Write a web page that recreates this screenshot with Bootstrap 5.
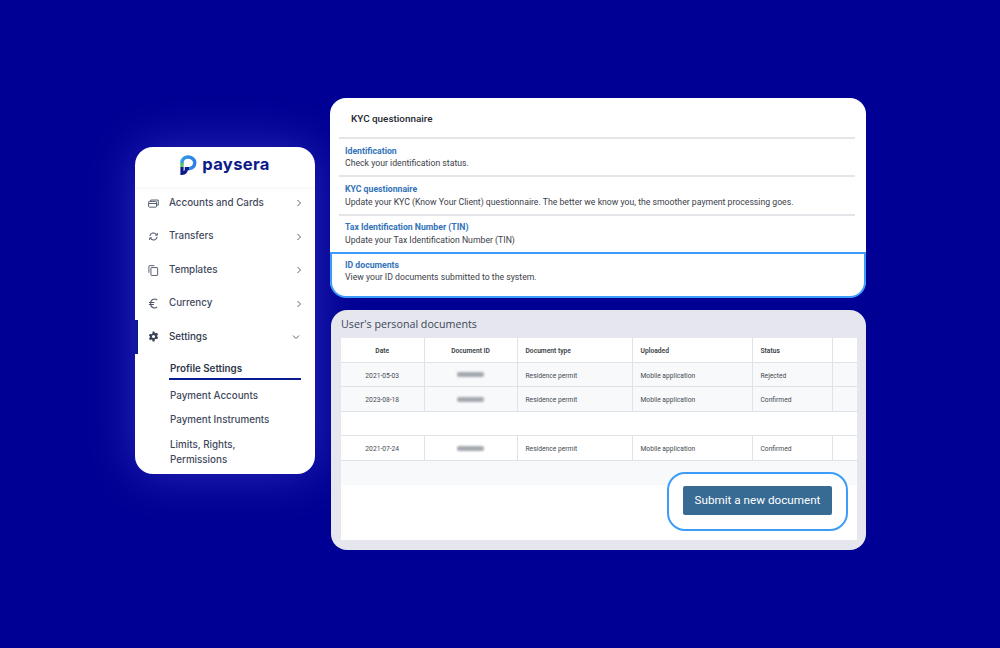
<!DOCTYPE html>
<html lang="en">
<head>
<meta charset="utf-8">
<title>Paysera KYC</title>
<link href="https://cdn.jsdelivr.net/npm/bootstrap@5.3.0/dist/css/bootstrap.min.css" rel="stylesheet">
<style>
html,body{height:100%;margin:0}
body{background:#000094;overflow:hidden;font-family:Roboto,"Liberation Sans",sans-serif}
.stage{width:1000px;height:648px;padding:98px 0 0 135px;gap:15px}
.side{width:180px;height:327px;margin-top:49px;background:#fff;border-radius:18px;box-shadow:0 0 50px rgba(120,120,255,.34);font-family:Inter,"Noto Sans",sans-serif;color:#3f495c}
.logo{height:39.7px;gap:5px;padding-bottom:3.7px;box-shadow:0 2px 4px rgba(20,30,80,.04)}
.logo-word{font:700 16.6px/1 Inter,sans-serif;color:#0c1a8a;letter-spacing:.3px;margin-top:-2px}
.mrow{height:33.4px;padding:0 12.6px 0 13px;font-size:9.8px;font-weight:500;background:transparent;border:0;color:#3f495c}
.mrow svg.ic{width:11px;height:11px;margin-right:10px;flex:none}
.mrow .chev{margin-left:auto;width:6px;height:8px}
.mrow.on{border-left:3px solid #0a1a8f;padding-left:10px;color:#2f384b}
.mrow.on .chev{width:8px;height:6px;margin-right:2px}
.sub{padding:0 14px 0 34px;font-size:9.8px;font-weight:500;line-height:15px}
.sub div{padding:4.7px 0 4.7px 1px}
.sub .cur{font-weight:600;color:#2f384b;border-bottom:2px solid #0a1a8f;padding:7.3px 0 2px 1px;margin-bottom:3px}
.sub .last{padding-top:5px}
.rcol{width:536px;gap:13px}
.kyc{height:199px;background:#fff;border-radius:16px;position:relative;font-size:8.7px;color:#3c4048}
.kyc h1{font-size:9.9px;font-weight:500;color:#24282f;margin:0;padding:1px 21px 0;line-height:39px;height:39px}
.list-group-item.kitem{margin:0 11px 0 9px;padding:5.8px 6px 0;height:38.3px;border:0;border-top:2px solid #e3e5e9;border-radius:0;background:transparent;line-height:12.4px;color:#3c4048}
.kitem b{display:block;color:#3373b8;font-weight:700}
.list-group-item.kitem.hl{margin:0;height:46px;padding:5px 13px 0;border:2px solid #3c9cf7;border-radius:0 0 16px 16px}
.docs{margin-left:1px;width:535px;height:240px;background:#e6e7ee;border-radius:16px;padding:0 9px 10px 10px}
.docs h2{font:400 10.7px/28px "Open Sans",sans-serif;color:#3d4658;margin:0}
.sheet{background:#fff;height:202px}
.grid{table-layout:fixed;width:100%;margin:0;font-size:6.7px;color:#454a52;--bs-table-bg:transparent;border-collapse:collapse}
.grid td,.grid th{padding:3px 0 0;height:24.5px;vertical-align:middle;border:0;border-bottom:1px solid #dfe3e8;border-right:1px solid #dfe3e8;box-shadow:none;background:transparent;color:#454a52}
.grid th{font-weight:600;color:#3a3e45;height:24px}
.grid td:last-child,.grid th:last-child{border-right:0}
.grid .tl{padding-left:8px;text-align:left}
.grid .tc{text-align:center}
.grid tr.tint td{background:#f8f9fb}
.smear{display:block;width:27px;height:5px;margin:-2px auto 0;background:#a4a9b0;border-radius:2px;filter:blur(1.2px)}
.tailrow{height:24px;background:#f8f9fb}
.ring{width:181px;height:59px;margin:-13px 9px 0 0;padding-bottom:2px;background:#fff;border:2px solid #3c9cf7;border-radius:18px;position:relative}
.send{background:#376b93;border:0;border-radius:2px;color:#fff;width:149px;height:29px;padding:0;font-size:11.7px;line-height:29px}
</style>
</head>
<body>
<div class="stage d-flex align-items-start">
  <aside class="side">
    <div class="logo d-flex align-items-center justify-content-center">
      <svg width="17" height="20" viewBox="0 0 17 20" aria-hidden="true">
        <defs><linearGradient id="g" x1="0" y1="0" x2="1" y2="0"><stop offset="0" stop-color="#2f9be0"/><stop offset="1" stop-color="#2f7fe8"/></linearGradient></defs>
        <path d="M2 9V7.5C2 4.2 4.6 2 8 2s6.8 2.4 6.8 5.8S12 13.6 9 13.6" fill="none" stroke="url(#g)" stroke-width="3.4"/>
        <path d="M2 8v4" stroke="#5cc06a" stroke-width="3.4" fill="none"/>
        <path d="M2 12v6.4c3.4 0 4.4-2.2 4.4-4.8H9" fill="none" stroke="#0b1a8c" stroke-width="3.2"/>
      </svg>
      <span class="logo-word">paysera</span>
    </div>
    <nav class="list-group list-group-flush">
      <div class="list-group-item mrow d-flex align-items-center">
        <svg class="ic" viewBox="0 0 12 12" fill="none" stroke="#4a5364"><rect x=".7" y="3.7" width="8.6" height="6.3" rx=".8"/><path d="M.7 6h8.6M3 3.6V2.2h8.2v5.6H9.4"/></svg>
        Accounts and Cards
        <svg class="chev" viewBox="0 0 6 8" fill="none" stroke="#5a6372"><path d="M1.5 1l3 3-3 3"/></svg>
      </div>
      <div class="list-group-item mrow d-flex align-items-center">
        <svg class="ic" viewBox="0 0 12 12" fill="none" stroke="#4a5364" stroke-width="1.1"><path d="M2 5.5A4 4 0 0 1 9.3 4M10 6.5A4 4 0 0 1 2.7 8"/><path d="M10.2 2.2V4.6H7.8M1.8 9.8V7.4h2.4" stroke-width="1"/></svg>
        Transfers
        <svg class="chev" viewBox="0 0 6 8" fill="none" stroke="#5a6372"><path d="M1.5 1l3 3-3 3"/></svg>
      </div>
      <div class="list-group-item mrow d-flex align-items-center">
        <svg class="ic" viewBox="0 0 12 12" fill="none" stroke="#4a5364"><rect x="3.2" y="2.8" width="7.3" height="8.6" rx=".6"/><path d="M1 8.5V1.2c0-.3.2-.5.5-.5H7"/></svg>
        Templates
        <svg class="chev" viewBox="0 0 6 8" fill="none" stroke="#5a6372"><path d="M1.5 1l3 3-3 3"/></svg>
      </div>
      <div class="list-group-item mrow d-flex align-items-center">
        <svg class="ic" viewBox="0 0 12 12" fill="none" stroke="#4a5364" stroke-width="1.1"><path d="M10 2.2A4.2 4.2 0 0 0 3 6a4.2 4.2 0 0 0 7 3.8M1 5h6M1 7h5.4"/></svg>
        Currency
        <svg class="chev" viewBox="0 0 6 8" fill="none" stroke="#5a6372"><path d="M1.5 1l3 3-3 3"/></svg>
      </div>
      <div class="list-group-item mrow on d-flex align-items-center">
        <svg class="ic" viewBox="0 0 12 12" fill="#3a4458"><path fill-rule="evenodd" d="M5 .5h2l.3 1.5 1 .5L9.8 2l1.2 1.9-1.1 1 .1 1.1 1.1 1L10 9l-1.5-.5-1 .6L7.1 11.5H5l-.3-1.5-1-.6L2.2 10 1 8l1.1-1V6L1 5l1.2-2 1.5.5 1-.6zM6 4.3a1.7 1.7 0 1 0 0 3.4 1.7 1.7 0 0 0 0-3.4z"/></svg>
        Settings
        <svg class="chev" viewBox="0 0 8 6" fill="none" stroke="#5a6372"><path d="M1 1.5l3 3 3-3"/></svg>
      </div>
    </nav>
    <div class="sub">
      <div class="cur">Profile Settings</div>
      <div>Payment Accounts</div>
      <div>Payment Instruments</div>
      <div class="last">Limits, Rights,<br>Permissions</div>
    </div>
  </aside>

  <main class="rcol d-flex flex-column">
    <section class="kyc">
      <h1>KYC questionnaire</h1>
      <div class="list-group list-group-flush">
        <div class="list-group-item kitem"><b>Identification</b>Check your identification status.</div>
        <div class="list-group-item kitem"><b>KYC questionnaire</b>Update your KYC (Know Your Client) questionnaire. The better we know you, the smoother payment processing goes.</div>
        <div class="list-group-item kitem"><b>Tax Identification Number (TIN)</b>Update your Tax Identification Number (TIN)</div>
        <div class="list-group-item kitem hl"><b>ID documents</b>View your ID documents submitted to the system.</div>
      </div>
    </section>
    <section class="docs">
      <h2>User's personal documents</h2>
      <div class="sheet">
        <table class="table grid">
          <colgroup><col style="width:83px"><col style="width:93px"><col style="width:115px"><col style="width:120px"><col style="width:80px"><col></colgroup>
          <thead><tr><th class="tc">Date</th><th class="tc">Document ID</th><th class="tl">Document type</th><th class="tl">Uploaded</th><th class="tl">Status</th><th></th></tr></thead>
          <tbody>
            <tr class="tint"><td class="tc">2021-05-03</td><td><span class="smear"></span></td><td class="tl">Residence permit</td><td class="tl">Mobile application</td><td class="tl">Rejected</td><td></td></tr>
            <tr class="tint"><td class="tc">2023-08-18</td><td><span class="smear"></span></td><td class="tl">Residence permit</td><td class="tl">Mobile application</td><td class="tl">Confirmed</td><td></td></tr>
            <tr><td colspan="6"></td></tr>
            <tr><td class="tc">2021-07-24</td><td><span class="smear"></span></td><td class="tl">Residence permit</td><td class="tl">Mobile application</td><td class="tl">Confirmed</td><td></td></tr>
          </tbody>
        </table>
        <div class="tailrow"></div>
        <div class="d-flex justify-content-end">
          <div class="ring d-flex align-items-center justify-content-center">
            <button type="button" class="btn send">Submit a new document</button>
          </div>
        </div>
      </div>
    </section>
  </main>
</div>
</body>
</html>
